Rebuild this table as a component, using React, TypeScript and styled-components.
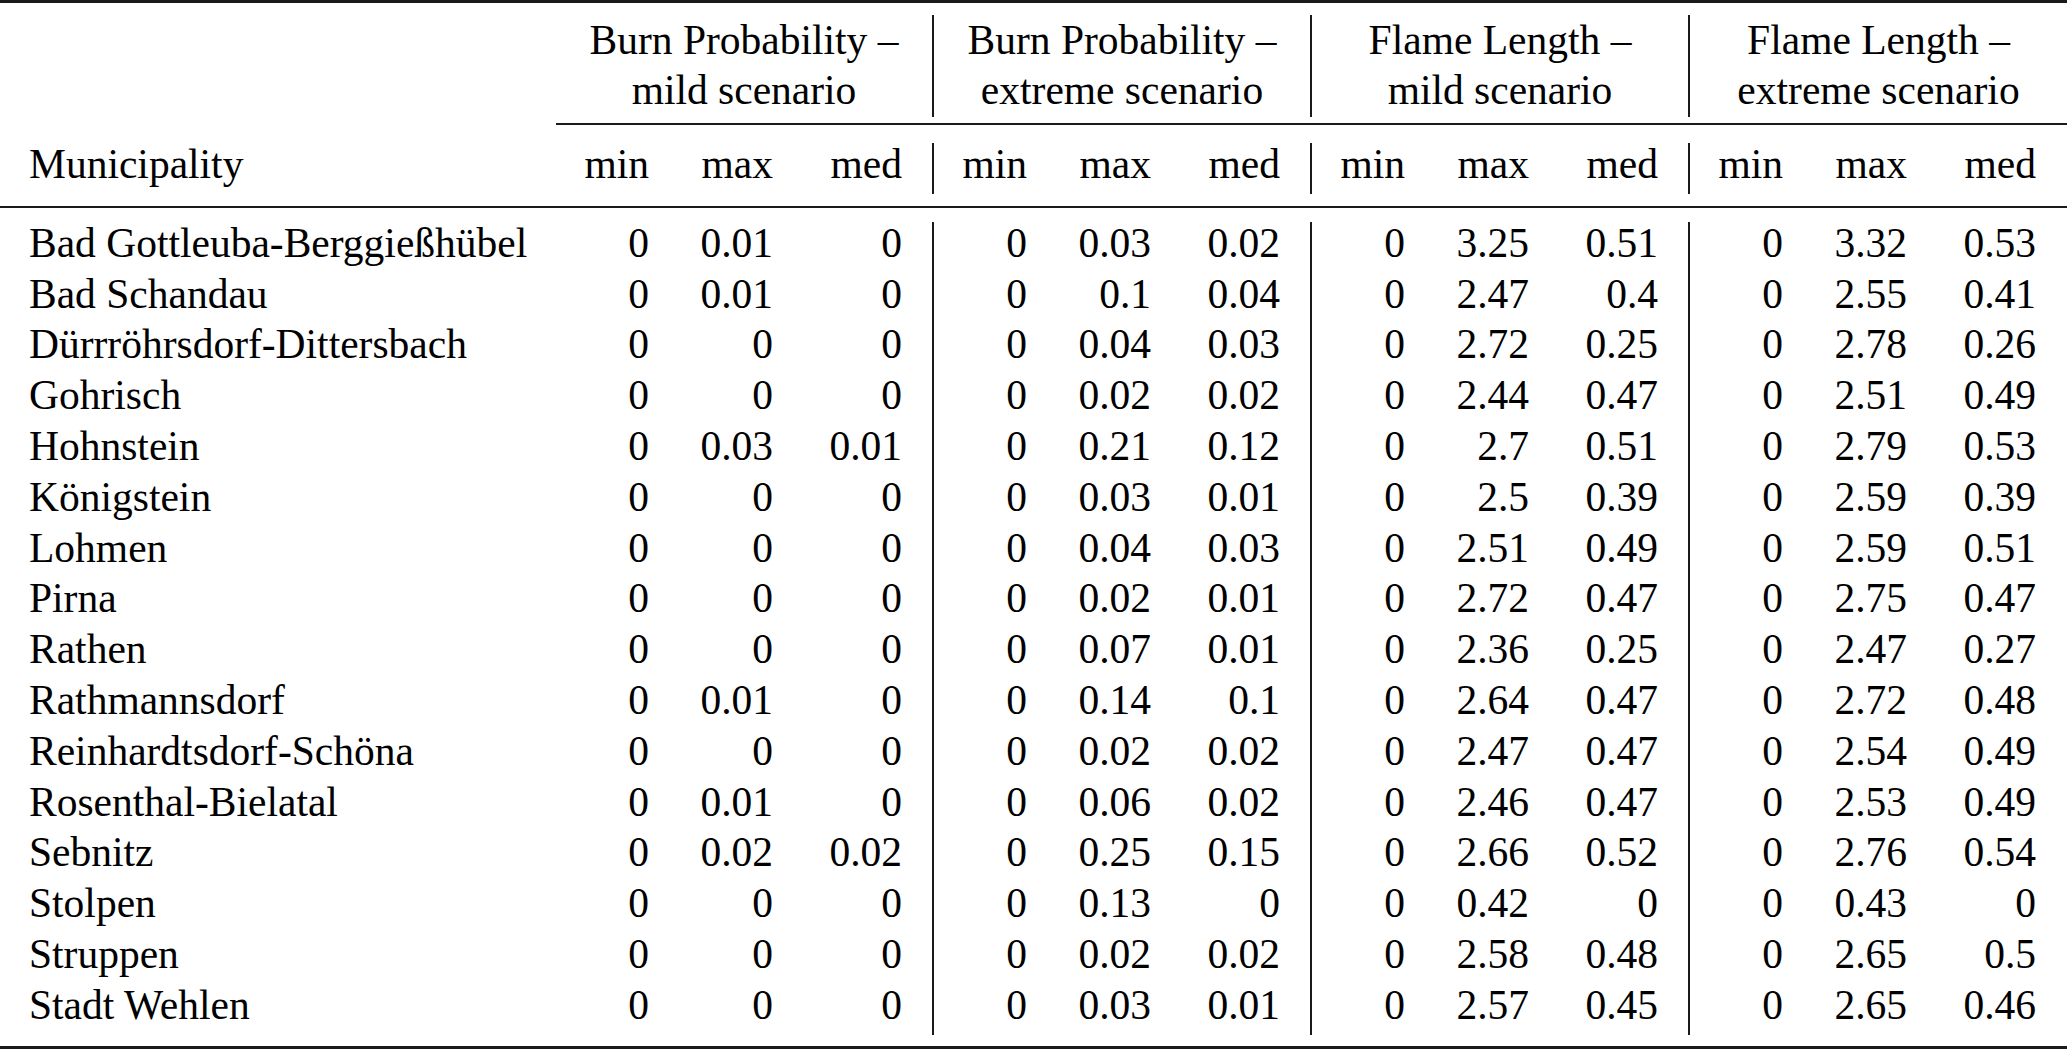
import * as React from 'react';
import styled, { createGlobalStyle } from 'styled-components';

const GlobalStyle = createGlobalStyle`
	html, body {
		margin: 0;
		padding: 0;
		background: #ffffff;
	}
`;

const Table = styled.table`
	width: 2067px;
	table-layout: fixed;
	border-collapse: separate;
	border-spacing: 0;
	font-family: 'Liberation Serif', 'Times New Roman', serif;
	font-size: 41.5px;
	color: #000;
`;

const SpacerCell = styled.td`
	padding: 0;
	border: 0;
`;

const Rule = styled.div<{ $before: number; $weight: number; $after: number }>`
	margin-top: ${(p) => p.$before}px;
	border-top: ${(p) => p.$weight}px solid #1a1a1a;
	height: ${(p) => p.$after}px;
`;

const Gap = styled.div<{ $height: number }>`
	height: ${(p) => p.$height}px;
`;

const GroupHead = styled.th<{ $ruled?: boolean }>`
	height: 100px;
	padding: 0 0 2px 0;
	vertical-align: top;
	text-align: center;
	font-weight: normal;
	line-height: 50px;
	border-right: ${(p) => (p.$ruled ? '2px solid #1a1a1a' : '0')};
`;

const Cell = styled.td<{ $ruled?: boolean; $left?: boolean }>`
	padding: 0 ${(p) => (p.$left ? '0' : p.$ruled ? '30px' : '31px')} 8.8px
		${(p) => (p.$left ? '29px' : '0')};
	line-height: 42px;
	vertical-align: top;
	white-space: nowrap;
	text-align: ${(p) => (p.$left ? 'left' : 'right')};
	font-weight: normal;
	border-right: ${(p) => (p.$ruled ? '2px solid #1a1a1a' : '0')};
`;

const HeadCell = styled(Cell).attrs({ as: 'th' })``;

const columnWidths = [556, 124, 124, 130, 124, 124, 130, 124, 124, 130, 124, 124, 129];

const groups = [
	['Burn Probability –', 'mild scenario'],
	['Burn Probability –', 'extreme scenario'],
	['Flame Length –', 'mild scenario'],
	['Flame Length –', 'extreme scenario'],
];

type Row = [string, string[]];

const rows: Array<Row> = [
	['Bad Gottleuba-Berggießhübel', ['0', '0.01', '0', '0', '0.03', '0.02', '0', '3.25', '0.51', '0', '3.32', '0.53']],
	['Bad Schandau', ['0', '0.01', '0', '0', '0.1', '0.04', '0', '2.47', '0.4', '0', '2.55', '0.41']],
	['Dürrröhrsdorf-Dittersbach', ['0', '0', '0', '0', '0.04', '0.03', '0', '2.72', '0.25', '0', '2.78', '0.26']],
	['Gohrisch', ['0', '0', '0', '0', '0.02', '0.02', '0', '2.44', '0.47', '0', '2.51', '0.49']],
	['Hohnstein', ['0', '0.03', '0.01', '0', '0.21', '0.12', '0', '2.7', '0.51', '0', '2.79', '0.53']],
	['Königstein', ['0', '0', '0', '0', '0.03', '0.01', '0', '2.5', '0.39', '0', '2.59', '0.39']],
	['Lohmen', ['0', '0', '0', '0', '0.04', '0.03', '0', '2.51', '0.49', '0', '2.59', '0.51']],
	['Pirna', ['0', '0', '0', '0', '0.02', '0.01', '0', '2.72', '0.47', '0', '2.75', '0.47']],
	['Rathen', ['0', '0', '0', '0', '0.07', '0.01', '0', '2.36', '0.25', '0', '2.47', '0.27']],
	['Rathmannsdorf', ['0', '0.01', '0', '0', '0.14', '0.1', '0', '2.64', '0.47', '0', '2.72', '0.48']],
	['Reinhardtsdorf-Schöna', ['0', '0', '0', '0', '0.02', '0.02', '0', '2.47', '0.47', '0', '2.54', '0.49']],
	['Rosenthal-Bielatal', ['0', '0.01', '0', '0', '0.06', '0.02', '0', '2.46', '0.47', '0', '2.53', '0.49']],
	['Sebnitz', ['0', '0.02', '0.02', '0', '0.25', '0.15', '0', '2.66', '0.52', '0', '2.76', '0.54']],
	['Stolpen', ['0', '0', '0', '0', '0.13', '0', '0', '0.42', '0', '0', '0.43', '0']],
	['Struppen', ['0', '0', '0', '0', '0.02', '0.02', '0', '2.58', '0.48', '0', '2.65', '0.5']],
	['Stadt Wehlen', ['0', '0', '0', '0', '0.03', '0.01', '0', '2.57', '0.45', '0', '2.65', '0.46']],
];

const subHeads = ['min', 'max', 'med'];

// a value cell closes a group (and gets the vertical rule) every third column, except the last
const closesGroup = (i: number): boolean => i % 3 === 2 && i < 11;

const App = (): React.ReactElement => {
	return (
		<>
			<GlobalStyle />
			<Table>
				<colgroup>
					{columnWidths.map((w, i) => (
						<col key={i} style={{ width: w }} />
					))}
				</colgroup>
				<thead>
					<tr>
						<SpacerCell colSpan={13}>
							<Rule $before={0} $weight={3} $after={12} />
						</SpacerCell>
					</tr>
					<tr>
						<SpacerCell />
						{groups.map((g, i) => (
							<GroupHead key={i} colSpan={3} $ruled={i < 3}>
								{g[0]}
								<br />
								{g[1]}
							</GroupHead>
						))}
					</tr>
					<tr>
						<SpacerCell>
							<Gap $height={26} />
						</SpacerCell>
						<SpacerCell colSpan={12}>
							<Rule $before={6} $weight={2} $after={18} />
						</SpacerCell>
					</tr>
					<tr>
						<HeadCell $left>Municipality</HeadCell>
						{Array.from({ length: 12 }, (_, i) => (
							<HeadCell key={i} $ruled={closesGroup(i)}>
								{subHeads[i % 3]}
							</HeadCell>
						))}
					</tr>
					<tr>
						<SpacerCell colSpan={13}>
							<Rule $before={12} $weight={2} $after={14} />
						</SpacerCell>
					</tr>
				</thead>
				<tbody>
					{rows.map(([name, values]) => (
						<tr key={name}>
							<Cell $left>{name}</Cell>
							{values.map((v, i) => (
								<Cell key={i} $ruled={closesGroup(i)}>
									{v}
								</Cell>
							))}
						</tr>
					))}
					<tr>
						<SpacerCell colSpan={13}>
							<Rule $before={11} $weight={3} $after={0} />
						</SpacerCell>
					</tr>
				</tbody>
			</Table>
		</>
	);
};

export default App;
